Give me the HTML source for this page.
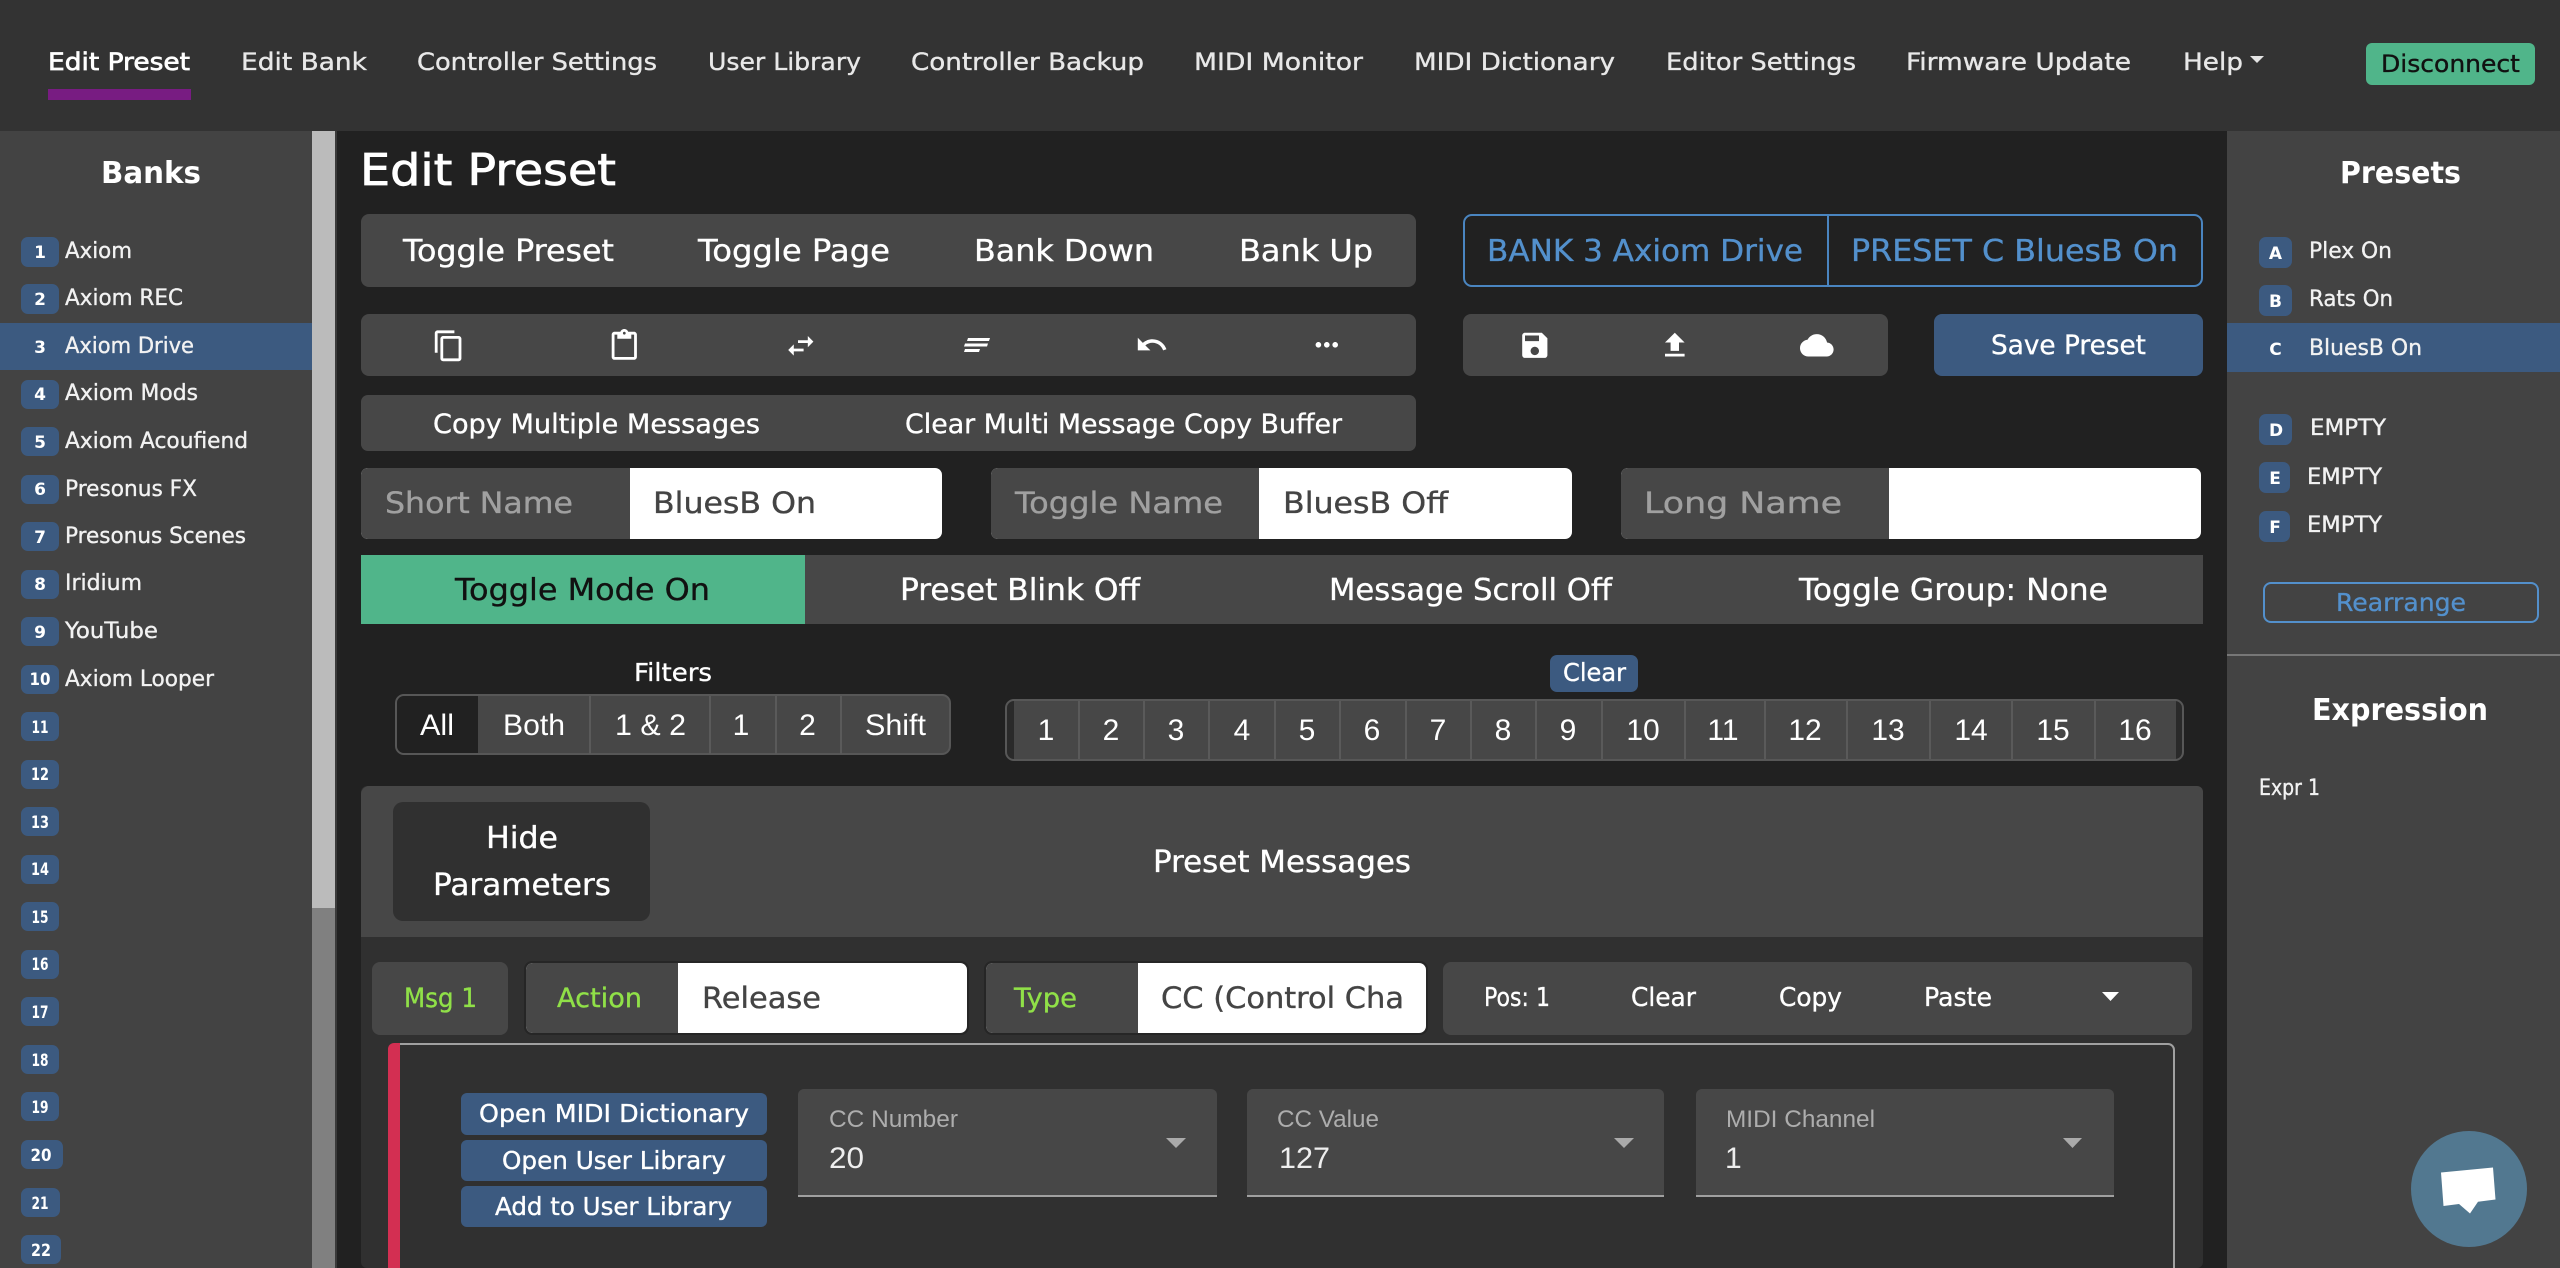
<!DOCTYPE html>
<html lang="en"><head><meta charset="utf-8"><title>Edit Preset</title>
<style>
html,body{margin:0;padding:0;background:#212121;width:2560px;height:1268px;overflow:hidden}
svg{display:block}
text{white-space:pre}
.m{font-family:"DejaVu Sans",sans-serif;color:#fff;fill:currentColor;stroke:currentColor;stroke-width:.35px}
.b{font-family:"DejaVu Sans",sans-serif;font-weight:700;fill:#fff}
.l{font-family:"Liberation Sans",sans-serif;fill:#fff}
.nav{font-size:24px;color:#e8e8e8}
.bk{font-size:22px;color:#f2f2f2}
.bd{font-size:17px;text-anchor:middle}
.t1{font-size:30px}
.t2{font-size:27px}
.inp{font-size:29px;color:#a0a0a0}
.val{font-size:29px;color:#444}
.blue{color:#5390cc}
.grn{font-size:27px;color:#90e048}
.num{font-size:30px;text-anchor:middle}
.lab{font-size:24px;fill:#adadad}
.sv{font-size:30px;fill:#eee}
</style></head><body>
<svg xmlns="http://www.w3.org/2000/svg" width="2560" height="1268" viewBox="0 0 2560 1268">
<rect width="2560" height="1268" fill="#212121"/>

<!-- nav -->
<rect width="2560" height="131" fill="#333"/>
<text class="m nav" style="color:#fff;stroke-width:.7px" x="48" y="70" textLength="142" lengthAdjust="spacingAndGlyphs">Edit Preset</text>
<rect x="48" y="89" width="143" height="11" fill="#781c82"/>
<text class="m nav" x="241" y="70" textLength="126" lengthAdjust="spacingAndGlyphs">Edit Bank</text>
<text class="m nav" x="417" y="70" textLength="240" lengthAdjust="spacingAndGlyphs">Controller Settings</text>
<text class="m nav" x="708" y="70" textLength="153" lengthAdjust="spacingAndGlyphs">User Library</text>
<text class="m nav" x="911" y="70" textLength="233" lengthAdjust="spacingAndGlyphs">Controller Backup</text>
<text class="m nav" x="1194" y="70" textLength="169" lengthAdjust="spacingAndGlyphs">MIDI Monitor</text>
<text class="m nav" x="1414" y="70" textLength="201" lengthAdjust="spacingAndGlyphs">MIDI Dictionary</text>
<text class="m nav" x="1666" y="70" textLength="190" lengthAdjust="spacingAndGlyphs">Editor Settings</text>
<text class="m nav" x="1906" y="70" textLength="225" lengthAdjust="spacingAndGlyphs">Firmware Update</text>
<text class="m nav" x="2183" y="70" textLength="60" lengthAdjust="spacingAndGlyphs">Help</text>
<polygon points="2250,56 2264,56 2257,63" fill="#e4e4e4"/>
<rect x="2366" y="43" width="169" height="42" rx="6" fill="#50b58a"/>
<text class="m" style="font-size:24px;color:#111" x="2381" y="72" textLength="139" lengthAdjust="spacingAndGlyphs">Disconnect</text>

<!-- left sidebar -->
<rect x="0" y="131" width="312" height="1137" fill="#434343"/>
<rect x="312" y="131" width="23" height="777" fill="#bbb"/>
<rect x="312" y="908" width="23" height="360" fill="#808080"/>
<rect x="335" y="131" width="2" height="1137" fill="#3a3a3a"/>
<text class="b" style="font-size:30px" x="101" y="183" textLength="100" lengthAdjust="spacingAndGlyphs">Banks</text>
<rect x="0" y="323" width="312" height="47" fill="#3c5a80"/>
<g fill="#3c5a80">
<rect x="21" y="237" width="38" height="30" rx="7"/><rect x="21" y="284" width="38" height="30" rx="7"/>
<rect x="21" y="380" width="38" height="29" rx="7"/><rect x="21" y="427" width="38" height="29" rx="7"/>
<rect x="21" y="475" width="38" height="29" rx="7"/><rect x="21" y="522" width="38" height="29" rx="7"/>
<rect x="21" y="570" width="38" height="29" rx="7"/><rect x="21" y="617" width="38" height="29" rx="7"/>
<rect x="21" y="665" width="38" height="29" rx="7"/><rect x="21" y="712" width="38" height="29" rx="7"/>
<rect x="21" y="760" width="38" height="29" rx="7"/><rect x="21" y="807" width="38" height="29" rx="7"/>
<rect x="21" y="855" width="38" height="29" rx="7"/><rect x="21" y="902" width="38" height="29" rx="7"/>
<rect x="21" y="950" width="38" height="29" rx="7"/><rect x="21" y="997" width="38" height="29" rx="7"/>
<rect x="21" y="1045" width="38" height="29" rx="7"/><rect x="21" y="1092" width="38" height="29" rx="7"/>
<rect x="21" y="1140" width="42" height="29" rx="7"/><rect x="21" y="1188" width="39" height="29" rx="7"/>
<rect x="21" y="1235" width="40" height="29" rx="7"/>
</g>
<text class="b bd" x="40" y="258">1</text><text class="b bd" x="40" y="305">2</text><text class="b bd" x="40" y="353">3</text>
<text class="b bd" x="40" y="400">4</text><text class="b bd" x="40" y="448">5</text><text class="b bd" x="40" y="495">6</text>
<text class="b bd" x="40" y="543">7</text><text class="b bd" x="40" y="590">8</text><text class="b bd" x="40" y="638">9</text>
<text class="b bd" x="40" y="685" textLength="21" lengthAdjust="spacingAndGlyphs">10</text>
<text class="b bd" x="40" y="733" textLength="17" lengthAdjust="spacingAndGlyphs">11</text>
<text class="b bd" x="40" y="780" textLength="18" lengthAdjust="spacingAndGlyphs">12</text>
<text class="b bd" x="40" y="828" textLength="18" lengthAdjust="spacingAndGlyphs">13</text>
<text class="b bd" x="40" y="875" textLength="18" lengthAdjust="spacingAndGlyphs">14</text>
<text class="b bd" x="40" y="923" textLength="17" lengthAdjust="spacingAndGlyphs">15</text>
<text class="b bd" x="40" y="970" textLength="17" lengthAdjust="spacingAndGlyphs">16</text>
<text class="b bd" x="40" y="1018" textLength="17" lengthAdjust="spacingAndGlyphs">17</text>
<text class="b bd" x="40" y="1066" textLength="17" lengthAdjust="spacingAndGlyphs">18</text>
<text class="b bd" x="40" y="1113" textLength="17" lengthAdjust="spacingAndGlyphs">19</text>
<text class="b bd" x="41" y="1161" textLength="21" lengthAdjust="spacingAndGlyphs">20</text>
<text class="b bd" x="40" y="1209" textLength="17" lengthAdjust="spacingAndGlyphs">21</text>
<text class="b bd" x="41" y="1256" textLength="20" lengthAdjust="spacingAndGlyphs">22</text>
<text class="m bk" x="65" y="258" textLength="67" lengthAdjust="spacingAndGlyphs">Axiom</text>
<text class="m bk" x="65" y="305" textLength="118" lengthAdjust="spacingAndGlyphs">Axiom REC</text>
<text class="m bk" x="65" y="353" textLength="129" lengthAdjust="spacingAndGlyphs">Axiom Drive</text>
<text class="m bk" x="65" y="400" textLength="133" lengthAdjust="spacingAndGlyphs">Axiom Mods</text>
<text class="m bk" x="65" y="448" textLength="183" lengthAdjust="spacingAndGlyphs">Axiom Acoufiend</text>
<text class="m bk" x="65" y="496" textLength="132" lengthAdjust="spacingAndGlyphs">Presonus FX</text>
<text class="m bk" x="65" y="543" textLength="181" lengthAdjust="spacingAndGlyphs">Presonus Scenes</text>
<text class="m bk" x="65" y="590" textLength="77" lengthAdjust="spacingAndGlyphs">Iridium</text>
<text class="m bk" x="65" y="638" textLength="93" lengthAdjust="spacingAndGlyphs">YouTube</text>
<text class="m bk" x="65" y="686" textLength="149" lengthAdjust="spacingAndGlyphs">Axiom Looper</text>

<!-- right sidebar -->
<rect x="2227" y="131" width="333" height="1137" fill="#434343"/>
<text class="b" style="font-size:30px" x="2340" y="183" textLength="121" lengthAdjust="spacingAndGlyphs">Presets</text>
<rect x="2227" y="323" width="333" height="49" fill="#3c5a80"/>
<g fill="#3c5a80">
<rect x="2259" y="237" width="33" height="31" rx="7"/><rect x="2259" y="285" width="33" height="31" rx="7"/>
<rect x="2259" y="414" width="33" height="31" rx="7"/><rect x="2259" y="462" width="31" height="31" rx="7"/>
<rect x="2259" y="511" width="31" height="31" rx="7"/>
</g>
<text class="b bd" x="2275.500" y="259">A</text><text class="b bd" x="2275.500" y="307">B</text><text class="b bd" x="2275.500" y="355">C</text>
<text class="b bd" x="2276" y="436">D</text><text class="b bd" x="2275" y="484">E</text><text class="b bd" x="2275" y="533">F</text>
<text class="m bk" x="2309" y="258" textLength="83" lengthAdjust="spacingAndGlyphs">Plex On</text>
<text class="m bk" x="2309" y="306" textLength="84" lengthAdjust="spacingAndGlyphs">Rats On</text>
<text class="m bk" x="2309" y="355" textLength="113" lengthAdjust="spacingAndGlyphs">BluesB On</text>
<text class="m bk" x="2310" y="435" textLength="76" lengthAdjust="spacingAndGlyphs">EMPTY</text>
<text class="m bk" x="2307" y="484" textLength="75" lengthAdjust="spacingAndGlyphs">EMPTY</text>
<text class="m bk" x="2307" y="532" textLength="75" lengthAdjust="spacingAndGlyphs">EMPTY</text>
<rect x="2264" y="583" width="274" height="39" rx="7" fill="none" stroke="#5390cc" stroke-width="2"/>
<text class="m blue" style="font-size:25px" x="2336" y="611" textLength="130" lengthAdjust="spacingAndGlyphs">Rearrange</text>
<rect x="2227" y="654" width="333" height="2" fill="#777"/>
<text class="b" style="font-size:30px" x="2312" y="720" textLength="176" lengthAdjust="spacingAndGlyphs">Expression</text>
<text class="m bk" x="2259" y="795" textLength="61" lengthAdjust="spacingAndGlyphs">Expr 1</text>

<!-- main heading + toggle bar -->
<text class="m" style="font-size:44px;stroke-width:.8px" x="360" y="185" textLength="256" lengthAdjust="spacingAndGlyphs">Edit Preset</text>
<rect x="361" y="214" width="1055" height="73" rx="8" fill="#474747"/>
<text class="m t1" x="403" y="261" textLength="211" lengthAdjust="spacingAndGlyphs">Toggle Preset</text>
<text class="m t1" x="698" y="261" textLength="192" lengthAdjust="spacingAndGlyphs">Toggle Page</text>
<text class="m t1" x="974" y="261" textLength="180" lengthAdjust="spacingAndGlyphs">Bank Down</text>
<text class="m t1" x="1239" y="261" textLength="134" lengthAdjust="spacingAndGlyphs">Bank Up</text>

<rect x="1464" y="215" width="738" height="71" rx="8" fill="none" stroke="#4a85c0" stroke-width="2"/>
<rect x="1827" y="215" width="2" height="71" fill="#4a85c0"/>
<text class="m t1 blue" x="1487" y="261" textLength="316" lengthAdjust="spacingAndGlyphs">BANK 3 Axiom Drive</text>
<text class="m t1 blue" x="1851" y="261" textLength="327" lengthAdjust="spacingAndGlyphs">PRESET C BluesB On</text>

<!-- icon bar -->
<rect x="361" y="314" width="1055" height="62" rx="8" fill="#474747"/>
<g fill="#fff">
<path transform="translate(432 329) scale(1.4)" d="M16 1H4c-1.1 0-2 .9-2 2v14h2V3h12V1zm3 4H8c-1.1 0-2 .9-2 2v14c0 1.1.9 2 2 2h11c1.1 0 2-.9 2-2V7c0-1.1-.9-2-2-2zm0 16H8V7h11v14z"/>
<path transform="translate(607.500 329) scale(1.4)" d="M19 2h-4.180C14.400.84 13.300 0 12 0c-1.300 0-2.400.84-2.820 2H5c-1.100 0-2 .9-2 2v16c0 1.100.9 2 2 2h14c1.100 0 2-.9 2-2V4c0-1.100-.9-2-2-2zm-7 0c.55 0 1 .45 1 1s-.45 1-1 1-1-.45-1-1 .45-1 1-1zm7 18H5V4h2v3h10V4h2v16z"/>
<path transform="translate(784 329) scale(1.4)" d="M6.990 11L3 15l3.990 4v-3H14v-2H6.990v-3zM21 9l-3.990-4v3H10v2h7.010v3L21 9z"/>
<polygon points="968,338 990,338 989,341 967,341"/><polygon points="965,343.500 988,343.500 987,346.500 964,346.500"/><polygon points="965,349 980,349 979,352 964,352"/>
<path transform="translate(1135 328) scale(1.4)" d="M12.500 8c-2.650 0-5.050.99-6.900 2.600L2 7v9h9l-3.620-3.620c1.390-1.160 3.160-1.880 5.120-1.880 3.540 0 6.550 2.310 7.600 5.500l2.370-.78C21.080 11.030 17.150 8 12.500 8z"/>
<path transform="translate(1310 328) scale(1.4)" d="M6 10c-1.100 0-2 .9-2 2s.9 2 2 2 2-.9 2-2-.9-2-2-2zm12 0c-1.100 0-2 .9-2 2s.9 2 2 2 2-.9 2-2-.9-2-2-2zm-6 0c-1.100 0-2 .9-2 2s.9 2 2 2 2-.9 2-2-.9-2-2-2z"/>
</g>

<rect x="1463" y="314" width="425" height="62" rx="8" fill="#474747"/>
<g fill="#fff">
<path transform="translate(1518 328.500) scale(1.4)" d="M17 3H5c-1.110 0-2 .9-2 2v14c0 1.100.89 2 2 2h14c1.100 0 2-.9 2-2V7l-4-4zm-5 16c-1.660 0-3-1.340-3-3s1.340-3 3-3 3 1.340 3 3-1.340 3-3 3zm3-10H5V5h10v4z"/>
<path transform="translate(1658 328.500) scale(1.4)" d="M9 16h6v-6h4l-7-7-7 7h4zm-4 2h14v2H5z"/>
<path transform="translate(1800 328.500) scale(1.4)" d="M19.350 10.040C18.670 6.590 15.640 4 12 4 9.110 4 6.600 5.640 5.350 8.040 2.340 8.360 0 10.910 0 14c0 3.310 2.690 6 6 6h13c2.760 0 5-2.240 5-5 0-2.640-2.050-4.780-4.650-4.960z"/>
</g>
<rect x="1934" y="314" width="269" height="62" rx="8" fill="#3c5a80"/>
<text class="m t2" x="1991" y="354" textLength="155" lengthAdjust="spacingAndGlyphs">Save Preset</text>

<rect x="361" y="395" width="1055" height="56" rx="7" fill="#474747"/>
<text class="m t2" x="433" y="433" textLength="327" lengthAdjust="spacingAndGlyphs">Copy Multiple Messages</text>
<text class="m t2" x="905" y="433" textLength="437" lengthAdjust="spacingAndGlyphs">Clear Multi Message Copy Buffer</text>

<!-- name inputs -->
<rect x="361" y="468" width="581" height="71" rx="7" fill="#fff"/>
<path d="M368 468H630V539H368a7 7 0 0 1-7-7V475a7 7 0 0 1 7-7z" fill="#474747"/>
<text class="m inp" x="385" y="513" textLength="188" lengthAdjust="spacingAndGlyphs">Short Name</text>
<text class="m val" x="653" y="513" textLength="163" lengthAdjust="spacingAndGlyphs">BluesB On</text>
<rect x="991" y="468" width="581" height="71" rx="7" fill="#fff"/>
<path d="M998 468H1259V539H998a7 7 0 0 1-7-7V475a7 7 0 0 1 7-7z" fill="#474747"/>
<text class="m inp" x="1015" y="513" textLength="208" lengthAdjust="spacingAndGlyphs">Toggle Name</text>
<text class="m val" x="1283" y="513" textLength="165" lengthAdjust="spacingAndGlyphs">BluesB Off</text>
<rect x="1621" y="468" width="580" height="71" rx="7" fill="#fff"/>
<path d="M1628 468H1889V539H1628a7 7 0 0 1-7-7V475a7 7 0 0 1 7-7z" fill="#474747"/>
<text class="m inp" x="1644" y="513" textLength="198" lengthAdjust="spacingAndGlyphs">Long Name</text>

<!-- toggle mode row -->
<rect x="361" y="555" width="1842" height="69" fill="#474747"/>
<rect x="361" y="555" width="444" height="69" fill="#50b58a"/>
<text class="m t1" style="color:#111" x="455" y="600" textLength="255" lengthAdjust="spacingAndGlyphs">Toggle Mode On</text>
<text class="m t1" x="900" y="600" textLength="240" lengthAdjust="spacingAndGlyphs">Preset Blink Off</text>
<text class="m t1" x="1329" y="600" textLength="283" lengthAdjust="spacingAndGlyphs">Message Scroll Off</text>
<text class="m t1" x="1799" y="600" textLength="309" lengthAdjust="spacingAndGlyphs">Toggle Group: None</text>

<!-- filters -->
<text class="m" style="font-size:25px" x="634" y="681" textLength="78" lengthAdjust="spacingAndGlyphs">Filters</text>
<rect x="396" y="695" width="554" height="59" rx="8" fill="#474747" stroke="#575757" stroke-width="2"/>
<path d="M404 696H478V753H404a7 7 0 0 1-7-7V703a7 7 0 0 1 7-7z" fill="#212121"/>
<g fill="#5a5a5a"><rect x="589" y="696" width="2" height="58"/><rect x="709" y="696" width="2" height="58"/><rect x="775" y="696" width="2" height="58"/><rect x="840" y="696" width="2" height="58"/></g>
<text class="l" style="font-size:30px" x="420" y="735" textLength="34" lengthAdjust="spacingAndGlyphs">All</text>
<text class="l" style="font-size:30px" x="503" y="735" textLength="62" lengthAdjust="spacingAndGlyphs">Both</text>
<text class="l" style="font-size:30px" x="615" y="735" textLength="71" lengthAdjust="spacingAndGlyphs">1 &amp; 2</text>
<text class="l num" x="741" y="735">1</text>
<text class="l num" x="807.500" y="735">2</text>
<text class="l" style="font-size:30px" x="865" y="735" textLength="61" lengthAdjust="spacingAndGlyphs">Shift</text>

<!-- channels -->
<rect x="1550" y="655" width="88" height="37" rx="7" fill="#3c5a80"/>
<text class="m" style="font-size:25px" x="1563" y="681" textLength="63" lengthAdjust="spacingAndGlyphs">Clear</text>
<rect x="1006" y="700" width="1177" height="60" rx="8" fill="#2a2a2a" stroke="#575757" stroke-width="2"/>
<rect x="1014" y="701" width="1162" height="58" fill="#474747"/>
<g fill="#5a5a5a">
<rect x="1078" y="701" width="2" height="58"/><rect x="1143" y="701" width="2" height="58"/><rect x="1208" y="701" width="2" height="58"/>
<rect x="1274" y="701" width="2" height="58"/><rect x="1339" y="701" width="2" height="58"/><rect x="1405" y="701" width="2" height="58"/>
<rect x="1470" y="701" width="2" height="58"/><rect x="1535" y="701" width="2" height="58"/><rect x="1601" y="701" width="2" height="58"/>
<rect x="1684" y="701" width="2" height="58"/><rect x="1764" y="701" width="2" height="58"/><rect x="1846" y="701" width="2" height="58"/>
<rect x="1929" y="701" width="2" height="58"/><rect x="2011" y="701" width="2" height="58"/><rect x="2094" y="701" width="2" height="58"/>
</g>
<text class="l num" x="1046" y="740">1</text><text class="l num" x="1111" y="740">2</text><text class="l num" x="1176" y="740">3</text>
<text class="l num" x="1242" y="740">4</text><text class="l num" x="1307" y="740">5</text><text class="l num" x="1372" y="740">6</text>
<text class="l num" x="1438" y="740">7</text><text class="l num" x="1503" y="740">8</text><text class="l num" x="1568" y="740">9</text>
<text class="l num" x="1643" y="740">10</text><text class="l num" x="1723" y="740">11</text><text class="l num" x="1805" y="740">12</text>
<text class="l num" x="1888" y="740">13</text><text class="l num" x="1971" y="740">14</text><text class="l num" x="2053" y="740">15</text><text class="l num" x="2135" y="740">16</text>

<!-- preset messages panel -->
<rect x="361" y="786" width="1842" height="482" rx="6" fill="#303030"/>
<path d="M369 786H2197a6 6 0 0 1 6 6V937H361V794a8 8 0 0 1 8-8z" fill="#474747"/>
<rect x="393" y="802" width="257" height="119" rx="10" fill="#303030"/>
<text class="m t1" x="486" y="848" textLength="72" lengthAdjust="spacingAndGlyphs">Hide</text>
<text class="m t1" x="433" y="895" textLength="178" lengthAdjust="spacingAndGlyphs">Parameters</text>
<text class="m t1" x="1153" y="872" textLength="258" lengthAdjust="spacingAndGlyphs">Preset Messages</text>

<rect x="372" y="962" width="136" height="73" rx="8" fill="#474747"/>
<text class="m grn" x="404" y="1007" textLength="73" lengthAdjust="spacingAndGlyphs">Msg 1</text>

<rect x="524" y="961" width="445" height="74" rx="8" fill="#262626"/>
<rect x="526" y="963" width="441" height="70" rx="7" fill="#fff"/>
<path d="M533 963H678V1033H533a7 7 0 0 1-7-7V970a7 7 0 0 1 7-7z" fill="#474747"/>
<text class="m grn" x="557" y="1007" textLength="85" lengthAdjust="spacingAndGlyphs">Action</text>
<text class="m val" x="702" y="1008" textLength="119" lengthAdjust="spacingAndGlyphs">Release</text>

<rect x="984" y="961" width="444" height="74" rx="8" fill="#262626"/>
<rect x="986" y="963" width="440" height="70" rx="7" fill="#fff"/>
<path d="M993 963H1138V1033H993a7 7 0 0 1-7-7V970a7 7 0 0 1 7-7z" fill="#474747"/>
<text class="m grn" x="1014" y="1007" textLength="63" lengthAdjust="spacingAndGlyphs">Type</text>
<text class="m val" x="1161" y="1008" textLength="243" lengthAdjust="spacingAndGlyphs">CC (Control Cha</text>

<rect x="1443" y="962" width="749" height="73" rx="8" fill="#474747"/>
<text class="m" style="font-size:26px" x="1484" y="1006" textLength="66" lengthAdjust="spacingAndGlyphs">Pos: 1</text>
<text class="m" style="font-size:26px" x="1631" y="1006" textLength="65" lengthAdjust="spacingAndGlyphs">Clear</text>
<text class="m" style="font-size:26px" x="1779" y="1006" textLength="63" lengthAdjust="spacingAndGlyphs">Copy</text>
<text class="m" style="font-size:26px" x="1924" y="1006" textLength="68" lengthAdjust="spacingAndGlyphs">Paste</text>
<polygon points="2102,992 2119,992 2110.500,1001" fill="#fff"/>

<!-- inner card -->
<path d="M396 1268V1044H2168a6 6 0 0 1 6 6V1268" fill="#303030" stroke="#a0a0a0" stroke-width="2"/>
<path d="M400 1043H394a6 6 0 0 0-6 6V1268H400z" fill="#d32f52"/>

<rect x="461" y="1093" width="306" height="42" rx="6" fill="#3c5a80"/>
<rect x="461" y="1140" width="306" height="41" rx="6" fill="#3c5a80"/>
<rect x="461" y="1186" width="306" height="41" rx="6" fill="#3c5a80"/>
<text class="m" style="font-size:25px" x="479" y="1122" textLength="270" lengthAdjust="spacingAndGlyphs">Open MIDI Dictionary</text>
<text class="m" style="font-size:25px" x="502" y="1169" textLength="224" lengthAdjust="spacingAndGlyphs">Open User Library</text>
<text class="m" style="font-size:25px" x="495" y="1215" textLength="237" lengthAdjust="spacingAndGlyphs">Add to User Library</text>

<g>
<path d="M804 1089H1211a6 6 0 0 1 6 6V1197H798V1095a6 6 0 0 1 6-6z" fill="#474747"/>
<rect x="798" y="1195" width="419" height="2" fill="#a0a0a0"/>
<text class="l lab" x="829" y="1127" textLength="129" lengthAdjust="spacingAndGlyphs">CC Number</text>
<text class="l sv" x="829" y="1168" textLength="35" lengthAdjust="spacingAndGlyphs">20</text>
<polygon points="1166,1138 1186,1138 1176,1148" fill="#aaa"/>

<path d="M1253 1089H1658a6 6 0 0 1 6 6V1197H1247V1095a6 6 0 0 1 6-6z" fill="#474747"/>
<rect x="1247" y="1195" width="417" height="2" fill="#a0a0a0"/>
<text class="l lab" x="1277" y="1127" textLength="102" lengthAdjust="spacingAndGlyphs">CC Value</text>
<text class="l sv" x="1279" y="1168" textLength="51" lengthAdjust="spacingAndGlyphs">127</text>
<polygon points="1614,1138 1634,1138 1624,1148" fill="#aaa"/>

<path d="M1702 1089H2108a6 6 0 0 1 6 6V1197H1696V1095a6 6 0 0 1 6-6z" fill="#474747"/>
<rect x="1696" y="1195" width="418" height="2" fill="#a0a0a0"/>
<text class="l lab" x="1726" y="1127" textLength="149" lengthAdjust="spacingAndGlyphs">MIDI Channel</text>
<text class="l sv" x="1725" y="1168">1</text>
<polygon points="2063,1138 2082,1138 2072.500,1148" fill="#aaa"/>
</g>

<!-- chat -->
<circle cx="2469" cy="1189" r="58" fill="#527890"/>
<polygon points="2441,1172.500 2493,1167.500 2495.500,1199.500 2478,1201.700 2470,1213.500 2459,1204 2443.500,1206" fill="#fff"/>
</svg>
</body></html>
